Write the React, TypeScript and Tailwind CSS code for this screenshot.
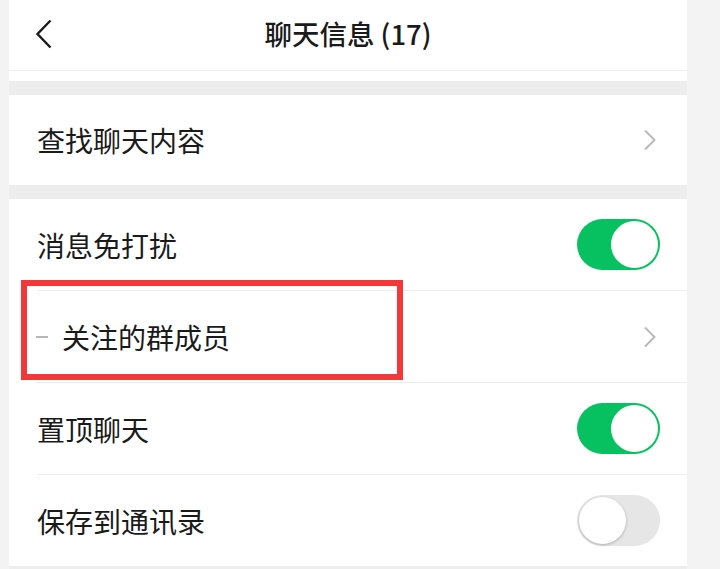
import type { ReactNode } from 'react';

const font = { fontFamily: '"Noto Sans CJK SC", "Noto Sans", sans-serif' };

function Chevron() {
  return (
    <svg width="14" height="22" viewBox="0 0 14 22" className="shrink-0">
      <path d="M2 1.5 L11.5 11 L2 20.5" fill="none" stroke="#b8b8b8" strokeWidth="1.9" />
    </svg>
  );
}

function Toggle({ on }: { on: boolean }) {
  if (on) {
    return (
      <div className="w-[83px] h-[51px] rounded-full bg-[#07c160] flex items-center justify-end p-[2px] shrink-0">
        <div className="w-[47px] h-[47px] rounded-full bg-white" />
      </div>
    );
  }
  return (
    <div className="w-[83px] h-[51px] rounded-full bg-[#e6e6e6] flex items-center justify-start p-[2px] shrink-0">
      <div className="w-[47px] h-[47px] rounded-full bg-white shadow-[0_1px_3px_rgba(0,0,0,0.25)]" />
    </div>
  );
}

function Label({ children }: { children: ReactNode }) {
  return <div className="text-[28px] text-[#1a1a1a] flex items-center">{children}</div>;
}

export default function App() {
  return (
    <div className="relative w-[720px] h-[569px] overflow-hidden bg-[#f3f3f3] flex" style={font}>
      <div className="ml-[9px] w-[678px] flex flex-col bg-[#ededed]">
        {/* header */}
        <div className="h-[71px] bg-white border-b border-[#efefef] relative flex items-center justify-center">
          <svg width="18" height="30" viewBox="0 0 18 30" className="absolute left-[26px] top-[19px]">
            <path d="M15.5 1.5 L2.5 15 L15.5 28.5" fill="none" stroke="#1a1a1a" strokeWidth="2.4" />
          </svg>
          <div className="text-[27.5px] font-medium text-[#1a1a1a] mt-[-2px]">聊天信息 (17)</div>
        </div>
        <div className="h-[10px] bg-white" />
        <div className="h-[14px]" />

        <div className="bg-white pl-[28px] pr-[30px] h-[90px] flex items-center justify-between">
          <Label>查找聊天内容</Label>
          <Chevron />
        </div>

        <div className="h-[14px]" />

        <div className="bg-white pl-[28px]">
          <div className="h-[92px] flex items-center justify-between border-b border-[#ededed] pr-[27px]">
            <Label>消息免打扰</Label>
            <Toggle on />
          </div>
          <div className="h-[92px] flex items-center justify-between border-b border-[#ededed] pr-[30px]">
            <Label>
              <span className="w-[12px] h-[2px] bg-[#b8b8b8] mr-[14px] ml-[-1px]" />
              关注的群成员
            </Label>
            <Chevron />
          </div>
          <div className="h-[92px] flex items-center justify-between border-b border-[#ededed] pr-[27px]">
            <Label>置顶聊天</Label>
            <Toggle on />
          </div>
          <div className="h-[91px] flex items-center justify-between pr-[27px]">
            <Label>保存到通讯录</Label>
            <Toggle on={false} />
          </div>
        </div>
        <div className="flex-1" />
      </div>
      <div className="flex-1" />

      {/* annotation box */}
      <div className="absolute left-[21px] top-[280px] w-[382px] h-[100px] border-[6px] border-[#f4383a]" />
    </div>
  );
}
